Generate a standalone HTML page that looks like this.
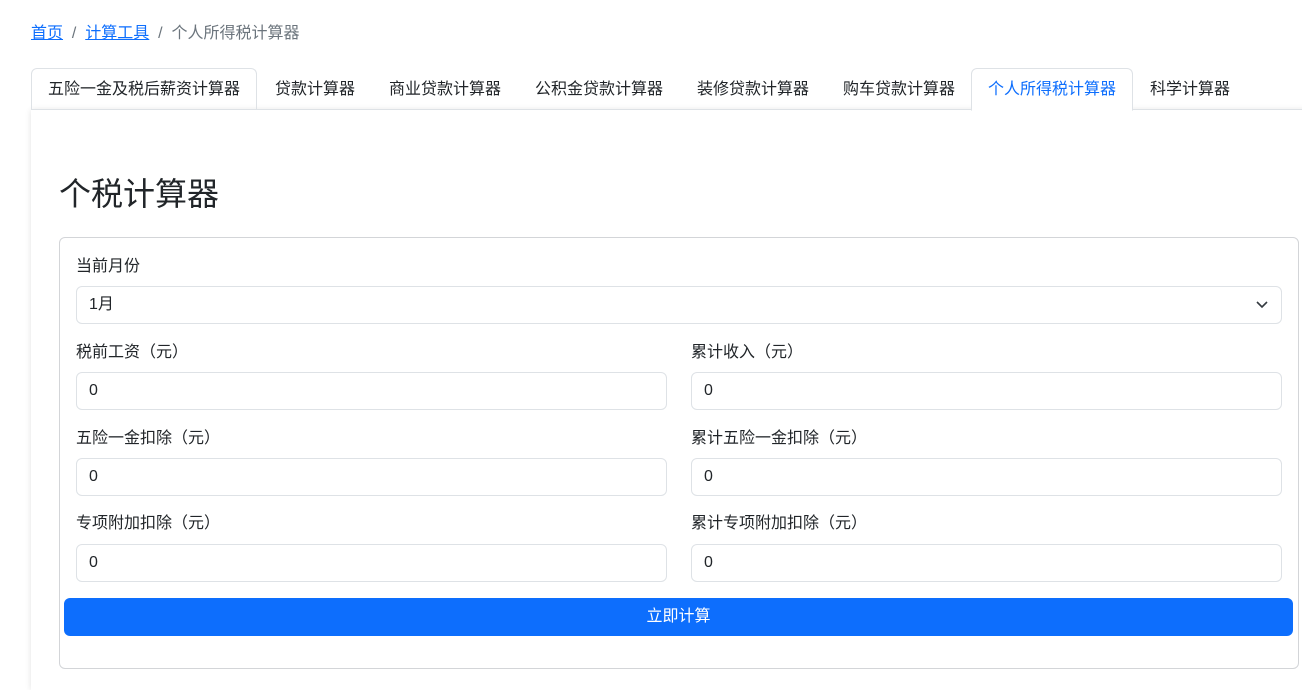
<!DOCTYPE html>
<html><head><meta charset="utf-8"><style>
*{box-sizing:border-box;margin:0;padding:0}
body{width:1302px;height:675px;overflow:hidden;background:#fff;font-family:"Liberation Sans","Noto Sans CJK SC",sans-serif;font-size:16px;color:#212529;position:relative}
.abs{position:absolute}
a{color:#0d6efd;text-decoration:underline}
.bc{left:31px;top:24px;font-size:16px;line-height:20px;color:#6c757d}
.bc a{color:#0d6efd}
.tabs{left:31px;top:68px;right:0;height:42px;border-bottom:1px solid #dee2e6}
.tab{position:absolute;top:0;height:42px;line-height:41px;padding:0 16px;border:1px solid transparent;border-radius:6px 6px 0 0;white-space:nowrap}
.card{left:31px;top:110px;width:1290px;height:580px;box-shadow:0 0 6px rgba(0,0,0,.12);background:#fff}
h1{position:absolute;left:59px;top:174px;font-size:32px;font-weight:400;line-height:40px}
.box{left:59px;top:237px;width:1240px;height:432px;border:1px solid #d3d5d8;border-radius:6px}
.lbl{position:absolute;font-size:16px;line-height:20px}
.inp{position:absolute;height:38px;border:1px solid #dee2e6;border-radius:6px;padding:0 12px;line-height:36px}
.btn{left:64px;top:598px;width:1229px;height:38px;background:#0d6efd;color:#fff;border-radius:6px;text-align:center;line-height:38px}
</style></head><body>
<div class="abs bc"><a>首页</a> &nbsp;/&nbsp; <a>计算工具</a> &nbsp;/&nbsp; 个人所得税计算器</div>
<div class="abs card"></div>
<div class="abs tabs">
<div class="tab" style="left:0;border-color:#dee2e6;border-bottom-color:transparent">五险一金及税后薪资计算器</div>
<div class="tab" style="left:227px">贷款计算器</div>
<div class="tab" style="left:341px">商业贷款计算器</div>
<div class="tab" style="left:487px">公积金贷款计算器</div>
<div class="tab" style="left:649px">装修贷款计算器</div>
<div class="tab" style="left:795px">购车贷款计算器</div>
<div class="tab" style="left:940px;color:#0d6efd;border-color:#dee2e6;border-bottom-color:#fff;background:#fff;height:43px">个人所得税计算器</div>
<div class="tab" style="left:1102px">科学计算器</div>
</div>
<h1>个税计算器</h1>
<div class="abs box"></div>
<div class="lbl" style="left:76px;top:257px">当前月份</div>
<div class="inp" style="left:76px;top:286px;width:1206px">1月
<svg style="position:absolute;right:12px;top:13px" width="14" height="10" viewBox="0 0 14 10"><path d="M2 2l5 5 5-5" fill="none" stroke="#343a40" stroke-width="1.6"/></svg></div>
<div class="lbl" style="left:76px;top:343px">税前工资（元）</div>
<div class="lbl" style="left:691px;top:343px">累计收入（元）</div>
<div class="inp" style="left:76px;top:372px;width:591px">0</div>
<div class="inp" style="left:691px;top:372px;width:591px">0</div>
<div class="lbl" style="left:76px;top:429px">五险一金扣除（元）</div>
<div class="lbl" style="left:691px;top:429px">累计五险一金扣除（元）</div>
<div class="inp" style="left:76px;top:458px;width:591px">0</div>
<div class="inp" style="left:691px;top:458px;width:591px">0</div>
<div class="lbl" style="left:76px;top:514px">专项附加扣除（元）</div>
<div class="lbl" style="left:691px;top:514px">累计专项附加扣除（元）</div>
<div class="inp" style="left:76px;top:544px;width:591px">0</div>
<div class="inp" style="left:691px;top:544px;width:591px">0</div>
<div class="abs btn">立即计算</div>
</body></html>
